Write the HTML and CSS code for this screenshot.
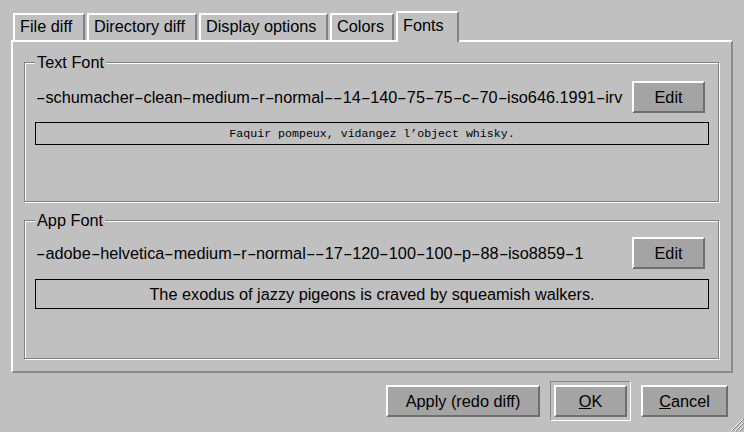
FILE: index.html
```html
<!DOCTYPE html>
<html>
<head>
<meta charset="utf-8">
<link rel="stylesheet" href="styles.css">
</head>
<body>
<div class="dialog">
  <div class="tabs">
    <div class="tab t1">File diff</div>
    <div class="tab t2">Directory diff</div>
    <div class="tab t3">Display options</div>
    <div class="tab t4">Colors</div>
    <div class="tab t5 active">Fonts</div>
  </div>
  <div class="panel">
    <div class="group g1">
      <span class="legend">Text Font</span>
      <div class="row">
        <span class="fontname"><span class="d">-</span>schumacher<span class="d">-</span>clean<span class="d">-</span>medium<span class="d">-</span>r<span class="d">-</span>normal<span class="d">-</span><span class="d">-</span>14<span class="d">-</span>140<span class="d">-</span>75<span class="d">-</span>75<span class="d">-</span>c<span class="d">-</span>70<span class="d">-</span>iso646.1991<span class="d">-</span>irv</span>
        <button class="btn edit">Edit</button>
      </div>
      <div class="sample mono">Faquir pompeux, vidangez l’object whisky.</div>
    </div>
    <div class="group g2">
      <span class="legend">App Font</span>
      <div class="row">
        <span class="fontname"><span class="d">-</span>adobe<span class="d">-</span>helvetica<span class="d">-</span>medium<span class="d">-</span>r<span class="d">-</span>normal<span class="d">-</span><span class="d">-</span>17<span class="d">-</span>120<span class="d">-</span>100<span class="d">-</span>100<span class="d">-</span>p<span class="d">-</span>88<span class="d">-</span>iso8859<span class="d">-</span>1</span>
        <button class="btn edit">Edit</button>
      </div>
      <div class="sample sans">The exodus of jazzy pigeons is craved by squeamish walkers.</div>
    </div>
  </div>
  <div class="actions">
    <button class="btn apply">Apply (redo diff)</button>
    <div class="default-frame"><button class="btn ok"><u>O</u>K</button></div>
    <button class="btn cancel"><u>C</u>ancel</button>
  </div>
  <svg class="grip" width="14" height="14" viewBox="0 0 14 14">
    <g stroke-width="1">
      <line x1="13" y1="1" x2="1" y2="13" stroke="#ffffff"/>
      <line x1="14" y1="1" x2="2" y2="13" stroke="#808080"/>
      <line x1="13" y1="5" x2="5" y2="13" stroke="#ffffff"/>
      <line x1="14" y1="5" x2="6" y2="13" stroke="#808080"/>
      <line x1="13" y1="9" x2="9" y2="13" stroke="#ffffff"/>
      <line x1="14" y1="9" x2="10" y2="13" stroke="#808080"/>
    </g>
  </svg>
</div>
</body>
</html>
```
FILE: styles.css
```css
* { box-sizing: border-box; }
html, body {
  margin: 0;
  padding: 0;
  background: #c0c0c0;
  width: 744px;
  height: 432px;
  overflow: hidden;
  font-family: "Liberation Sans", Arial, sans-serif;
  font-size: 16.3px;
  color: #000;
}
.dialog {
  position: relative;
  width: 744px;
  height: 432px;
  padding: 11px 0 0 11px;
}
.tabs {
  display: flex;
  align-items: flex-end;
  height: 29px;
  padding-left: 2px;
  gap: 2px;
}
.tab {
  height: 27px;
  border-top: 2px solid #ffffff;
  border-left: 2px solid #ffffff;
  border-right: 2px solid #808080;
  line-height: 23px;
  padding: 0 5px;
  white-space: nowrap;
}
.t1 { width: 72px; }
.t2 { width: 110px; }
.t3 { width: 129px; }
.t4 { width: 64px; }
.t5 { width: 63px; }
.tab.active {
  position: relative;
  z-index: 2;
  height: 31px;
  margin-bottom: -2px;
  background: #c0c0c0;
  line-height: 25px;
  padding-bottom: 4px;
}
.panel {
  position: relative;
  z-index: 1;
  width: 722px;
  height: 333px;
  border-top: 2px solid #ffffff;
  border-left: 2px solid #ffffff;
  border-right: 2px solid #8a8a8a;
  border-bottom: 2px solid #8a8a8a;
  padding: 20px 12px 0 11px;
}
.group {
  position: relative;
  width: 695px;
  border: 1px solid #808080;
  box-shadow: 1px 1px 0 #ffffff, inset 1px 1px 0 #ffffff;
  padding: 0 9px 0 10px;
}
.g1 { height: 140px; padding-top: 18px; }
.g2 { height: 139px; padding-top: 16px; margin-top: 18px; }
.legend {
  position: absolute;
  left: 10px;
  top: -10px;
  padding: 0 2px;
  background: #c0c0c0;
  line-height: 18px;
}
.row {
  display: flex;
  align-items: center;
  justify-content: space-between;
  height: 32px;
  padding-left: 1px;
  padding-right: 4px;
}
.fontname { white-space: nowrap; }
.d {
  display: inline-block;
  padding: 0 2px;
  transform: scaleX(1.75);
}
.btn {
  font-family: "Liberation Sans", Arial, sans-serif;
  font-size: 16.3px;
  color: #000;
  background: #a4a4a4;
  border-top: 2px solid #ffffff;
  border-left: 2px solid #ffffff;
  border-right: 2px solid #6e6e6e;
  border-bottom: 2px solid #6e6e6e;
  padding: 0;
  height: 32px;
  margin: 0;
}
.edit { width: 73px; }
.sample {
  margin-top: 9px;
  border: 1px solid #000;
  text-align: center;
  white-space: nowrap;
}
.mono {
  height: 23px;
  font-family: "Liberation Mono", "DejaVu Sans Mono", monospace;
  font-size: 11.6px;
  line-height: 21px;
}
.sans {
  height: 30px;
  margin-top: 10px;
  line-height: 28px;
}
.actions {
  display: flex;
  align-items: center;
  justify-content: flex-end;
  padding-right: 16px;
  margin-top: 8px;
}
.apply { width: 154px; margin-right: 10px; }
.default-frame {
  border-top: 1px solid #8a8a8a;
  border-left: 1px solid #8a8a8a;
  border-right: 1px solid #ffffff;
  border-bottom: 1px solid #ffffff;
  padding: 3px;
  margin-right: 10px;
}
.ok { width: 73px; display: block; }
.cancel { width: 87px; }
.grip {
  position: absolute;
  right: 0;
  bottom: 0;
}
```
